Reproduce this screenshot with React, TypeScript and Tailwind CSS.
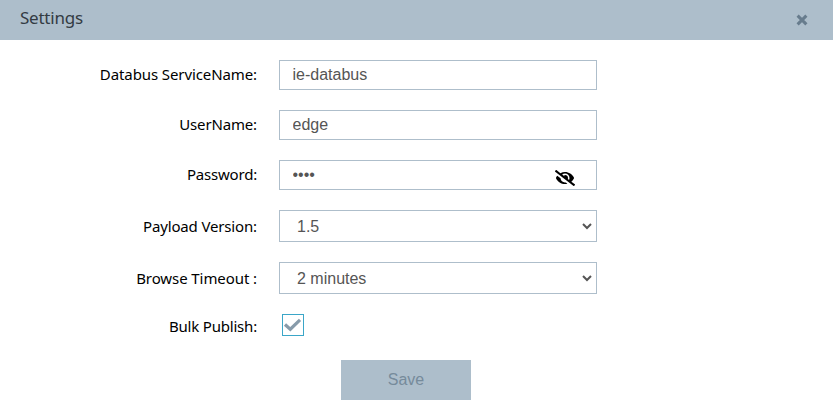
import React, { useState } from "react";
import { FaEyeSlash } from "react-icons/fa";

const field =
  "block w-[318px] rounded-none border border-[#aebecb] bg-white font-['Liberation_Sans',Arial,sans-serif] text-[16px] text-[#555] outline-none";

function Row({
  label,
  spacing,
  height,
  children,
}: {
  label: string;
  spacing: string;
  height: string;
  children: React.ReactNode;
}) {
  return (
    <div className={`flex items-center ${height}`}>
      <label className={`w-[257px] shrink-0 whitespace-nowrap text-right text-[15px] leading-5 text-black ${spacing}`}>
        {label}
      </label>
      <div className="ml-[22px]">{children}</div>
    </div>
  );
}

function Select({ value, options }: { value: string; options: string[] }) {
  return (
    <div className="relative">
      <select defaultValue={value} className={`${field} h-8 appearance-none pt-px pl-[17px]`}>
        {options.map((o) => (
          <option key={o}>{o}</option>
        ))}
      </select>
      <svg className="pointer-events-none absolute top-[13px] right-[5px] h-[7px] w-[10px]" viewBox="0 0 10 7" fill="none">
        <path d="M1 1L5 5L9 1" stroke="#555" strokeWidth="2" />
      </svg>
    </div>
  );
}

export default function App() {
  const [bulk, setBulk] = useState(true);
  return (
    <div className="h-[420px] w-[833px] overflow-hidden bg-white font-['Noto_Sans',sans-serif]">
      <header className="flex h-10 items-center justify-between bg-[#adbecb] pr-[25px] pl-5">
        <h1 className="-mt-1 text-[17px] leading-6 tracking-[-0.23px] text-[#333b43]">Settings</h1>
        <button aria-label="Close">
          <svg className="block h-3 w-3" viewBox="0 0 12 12">
            <path d="M1.6 1.6L10.4 10.4M10.4 1.6L1.6 10.4" stroke="#677c8d" strokeWidth="3" />
          </svg>
        </button>
      </header>
      <form className="flex flex-col pt-5" onSubmit={(e) => e.preventDefault()}>
        <div className="flex flex-col gap-5">
          <Row label="Databus ServiceName:" spacing="pb-0.5 tracking-[-0.1px]" height="h-[30px]">
            <input className={`${field} h-[30px] pl-[12.5px]`} defaultValue="ie-databus" />
          </Row>
          <Row label="UserName:" spacing="pb-0.5 tracking-[-0.15px]" height="h-[30px]">
            <input className={`${field} h-[30px] pl-[12.5px]`} defaultValue="edge" />
          </Row>
          <Row label="Password:" spacing="pb-0.5 tracking-[-0.2px]" height="h-[30px]">
            <div className="relative">
              <input type="password" className={`${field} h-[30px] pl-[12.5px]`} defaultValue="edge" />
              <FaEyeSlash className="absolute top-2.5 right-[22px] h-4 w-5 text-black" />
            </div>
          </Row>
          <Row label="Payload Version:" spacing="tracking-[-0.15px]" height="h-8">
            <Select value="1.5" options={["1.5"]} />
          </Row>
          <Row label="Browse Timeout :" spacing="tracking-[-0.08px]" height="h-8">
            <Select value="2 minutes" options={["2 minutes"]} />
          </Row>
          <Row label="Bulk Publish:" spacing="pt-0.5 tracking-[-0.2px]" height="h-[22px]">
            <button
              type="button"
              role="checkbox"
              aria-checked={bulk}
              onClick={() => setBulk(!bulk)}
              className="ml-[3px] flex h-[22px] w-[22px] items-center justify-center border border-[#3ba6c8] bg-white"
            >
              {bulk && (
                <svg className="h-5 w-5 shrink-0" viewBox="0 0 20 20" fill="none">
                  <path d="M2 9.5L7.3 14.2L17 4.9" stroke="#879baa" strokeWidth="3.2" />
                </svg>
              )}
            </button>
          </Row>
        </div>
        <button className="mt-6 ml-[341px] h-10 w-[130px] bg-[#adbecb] font-['Liberation_Sans',Arial,sans-serif] text-[16px] text-[#768b9b]">
          Save
        </button>
      </form>
    </div>
  );
}
